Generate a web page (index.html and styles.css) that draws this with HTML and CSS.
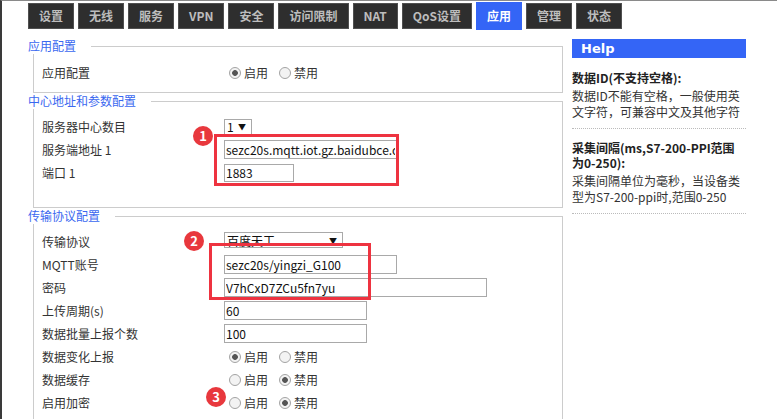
FILE: index.html
```html
<!DOCTYPE html>
<html lang="zh-CN">
<head>
  <meta charset="UTF-8">
  <title>应用配置</title>
  <link rel="stylesheet" href="styles.css">
</head>
<body>
<div class="frame">
  <div class="tabs">
    <span class="tab">设置</span>
    <span class="tab">无线</span>
    <span class="tab">服务</span>
    <span class="tab">VPN</span>
    <span class="tab">安全</span>
    <span class="tab">访问限制</span>
    <span class="tab">NAT</span>
    <span class="tab">QoS设置</span>
    <span class="tab active">应用</span>
    <span class="tab">管理</span>
    <span class="tab">状态</span>
  </div>

  <div class="main">
    <div class="content">

      <div class="section">
        <div class="section-head"><span class="section-title">应用配置</span><span class="section-line"></span></div>
        <div class="section-body">
          <div class="row">
            <span class="label">应用配置</span>
            <span class="radios">
              <label><input type="radio" name="app" checked>启用</label>
              <label><input type="radio" name="app">禁用</label>
            </span>
          </div>
        </div>
      </div>

      <div class="section">
        <div class="section-head"><span class="section-title">中心地址和参数配置</span><span class="section-line"></span></div>
        <div class="section-body tall">
          <div class="row">
            <span class="label">服务器中心数目</span>
            <span class="select small"><span>1</span><span class="arrow">▼</span></span>
          </div>
          <div class="row">
            <span class="label">服务端地址 1</span>
            <input class="text w173" type="text" value="sezc20s.mqtt.iot.gz.baidubce.com">
          </div>
          <div class="row">
            <span class="label">端口 1</span>
            <input class="text w70" type="text" value="1883">
          </div>
        </div>
      </div>

      <div class="section">
        <div class="section-head"><span class="section-title">传输协议配置</span><span class="section-line"></span></div>
        <div class="section-body open">
          <div class="row">
            <span class="label">传输协议</span>
            <span class="select wide"><span>百度天工</span><span class="arrow">▼</span></span>
          </div>
          <div class="row">
            <span class="label">MQTT账号</span>
            <input class="text w173" type="text" value="sezc20s/yingzi_G100">
          </div>
          <div class="row">
            <span class="label">密码</span>
            <input class="text w263" type="text" value="V7hCxD7ZCu5fn7yu">
          </div>
          <div class="row">
            <span class="label">上传周期(s)</span>
            <input class="text w143" type="text" value="60">
          </div>
          <div class="row">
            <span class="label">数据批量上报个数</span>
            <input class="text w143" type="text" value="100">
          </div>
          <div class="row">
            <span class="label">数据变化上报</span>
            <span class="radios">
              <label><input type="radio" name="change" checked>启用</label>
              <label><input type="radio" name="change">禁用</label>
            </span>
          </div>
          <div class="row">
            <span class="label">数据缓存</span>
            <span class="radios">
              <label><input type="radio" name="cache">启用</label>
              <label><input type="radio" name="cache" checked>禁用</label>
            </span>
          </div>
          <div class="row">
            <span class="label">启用加密</span>
            <span class="radios">
              <label><input type="radio" name="crypt">启用</label>
              <label><input type="radio" name="crypt" checked>禁用</label>
            </span>
          </div>
        </div>
      </div>

    </div>

    <div class="help">
      <div class="help-head">Help</div>
      <div class="help-item">
        <div class="help-title">数据ID(不支持空格):</div>
        <div class="help-text">数据ID不能有空格，一般使用英文字符，可兼容中文及其他字符</div>
      </div>
      <div class="help-item">
        <div class="help-title">采集间隔(ms,S7-200-PPI范围为0-250):</div>
        <div class="help-text">采集间隔单位为毫秒，当设备类型为S7-200-ppi时,范围0-250</div>
      </div>
    </div>
  </div>
</div>

<!-- 标注 -->
<div class="mark box1"></div>
<div class="mark box2"></div>
<span class="badge b1">1</span>
<span class="badge b2">2</span>
<span class="badge b3">3</span>

</body>
</html>
```

FILE: styles.css
```css
html, body {
  margin: 0;
  padding: 0;
  background: #fff;
  height: 100%;
  overflow: hidden;
}

body {
  font-family: "Noto Sans CJK SC", "Noto Sans", sans-serif;
  font-size: 12px;
  color: #333;
}

.frame {
  border-left: 2px solid #3a3a3a;
  border-top: 1px solid #8a8a8a;
  height: 100%;
  box-sizing: border-box;
  padding-left: 26px;
}

/* 顶部菜单 */
.tabs {
  display: flex;
  align-items: flex-start;
  gap: 4px;
  padding-top: 2px;
}

.tab {
  box-sizing: border-box;
  height: 26px;
  line-height: 24px;
  padding: 0 10px;
  min-width: 44px;
  text-align: center;
  background: #2e2e2e;
  border: 1px solid #505050;
  color: #bdbdbd;
  font-weight: bold;
  font-size: 12px;
}

.tab.active {
  background: #3465f6;
  border-color: #3465f6;
  color: #fff;
  height: 28px;
  line-height: 26px;
  margin-top: -1px;
}

.main {
  display: flex;
  gap: 9px;
  padding-top: 8px;
}

.content {
  width: 535px;
}

/* 分组 */
.section-head {
  display: flex;
  align-items: flex-end;
  height: 16px;
}

.section-title {
  color: #3a68f0;
  font-size: 12px;
  line-height: 16px;
  margin-top: -1px;
}

.section-line {
  flex: 1;
  height: 7px;
  margin-left: 15px;
  border-top: 1px solid #ccc;
  border-right: 1px solid #ccc;
}

.section-body {
  margin-left: 5px;
  border: 1px solid #ccc;
  border-top: none;
  padding: 7px 0 8px 8px;
}

.section-body.tall {
  padding-top: 6px;
  padding-bottom: 23px;
}

.section-body.open {
  padding-top: 6px;
  border-bottom: none;
}

.row {
  display: flex;
  align-items: center;
  height: 23px;
}

.label {
  width: 182px;
  flex-shrink: 0;
  color: #333;
}

.text {
  box-sizing: border-box;
  height: 19px;
  border: 1px solid #a9a9a9;
  padding: 0 1px;
  margin: 0;
  font-family: "Noto Sans CJK SC", "Noto Sans", sans-serif;
  font-size: 12px;
  color: #111;
  background: #fff;
  outline: none;
}

.w70 { width: 70px; height: 18px; }
.w143 { width: 143px; }
.w173 { width: 173px; }
.w263 { width: 263px; }

.select {
  box-sizing: border-box;
  display: flex;
  justify-content: space-between;
  align-items: center;
  height: 16px;
  border: 1px solid #a9a9a9;
  padding: 0 5px 0 2px;
  color: #111;
}

.select.small { width: 28px; }
.select.wide { width: 119px; margin-top: -3px; }

.arrow {
  font-size: 8px;
  color: #111;
}

.radios {
  display: flex;
  align-items: center;
}

.radios label {
  display: flex;
  align-items: center;
  margin-right: 6px;
}

.radios input {
  appearance: none;
  -webkit-appearance: none;
  box-sizing: border-box;
  width: 12px;
  height: 12px;
  margin: 0 3px 0 5px;
  border: 1px solid #a3a3a3;
  border-radius: 50%;
  background: #f3f3f3;
}

.radios input:checked {
  background: radial-gradient(circle, #555 0, #555 2.5px, #f3f3f3 3.2px);
}

/* 帮助 */
.help {
  width: 174px;
  margin-top: 1px;
}

.help-head {
  background: #3465f6;
  color: #fff;
  font-family: Verdana, "DejaVu Sans", sans-serif;
  font-weight: bold;
  font-size: 13px;
  height: 19px;
  line-height: 19px;
  padding-left: 9px;
}

.help-item {
  padding: 12px 0 8px;
  border-bottom: 1px dotted #bbb;
}

.help-item + .help-item {
  padding-top: 11px;
}

.help-title {
  font-weight: bold;
  color: #222;
  line-height: 15px;
}

.help-text {
  margin-top: 3px;
  line-height: 16px;
  color: #333;
}

/* 红色标注 */
.mark {
  position: absolute;
  box-sizing: border-box;
  border: 3px solid #ee3340;
}

.box1 { left: 214px; top: 134px; width: 185px; height: 52px; }
.box2 { left: 209px; top: 243px; width: 162px; height: 57px; }

.badge {
  position: absolute;
  width: 20px;
  height: 20px;
  border-radius: 50%;
  background: #e8383d;
  color: #fff;
  font-weight: bold;
  font-size: 13px;
  line-height: 20px;
  text-align: center;
}

.b1 { left: 193px; top: 126px; }
.b2 { left: 184px; top: 231px; }
.b3 { left: 206px; top: 387px; }
```
